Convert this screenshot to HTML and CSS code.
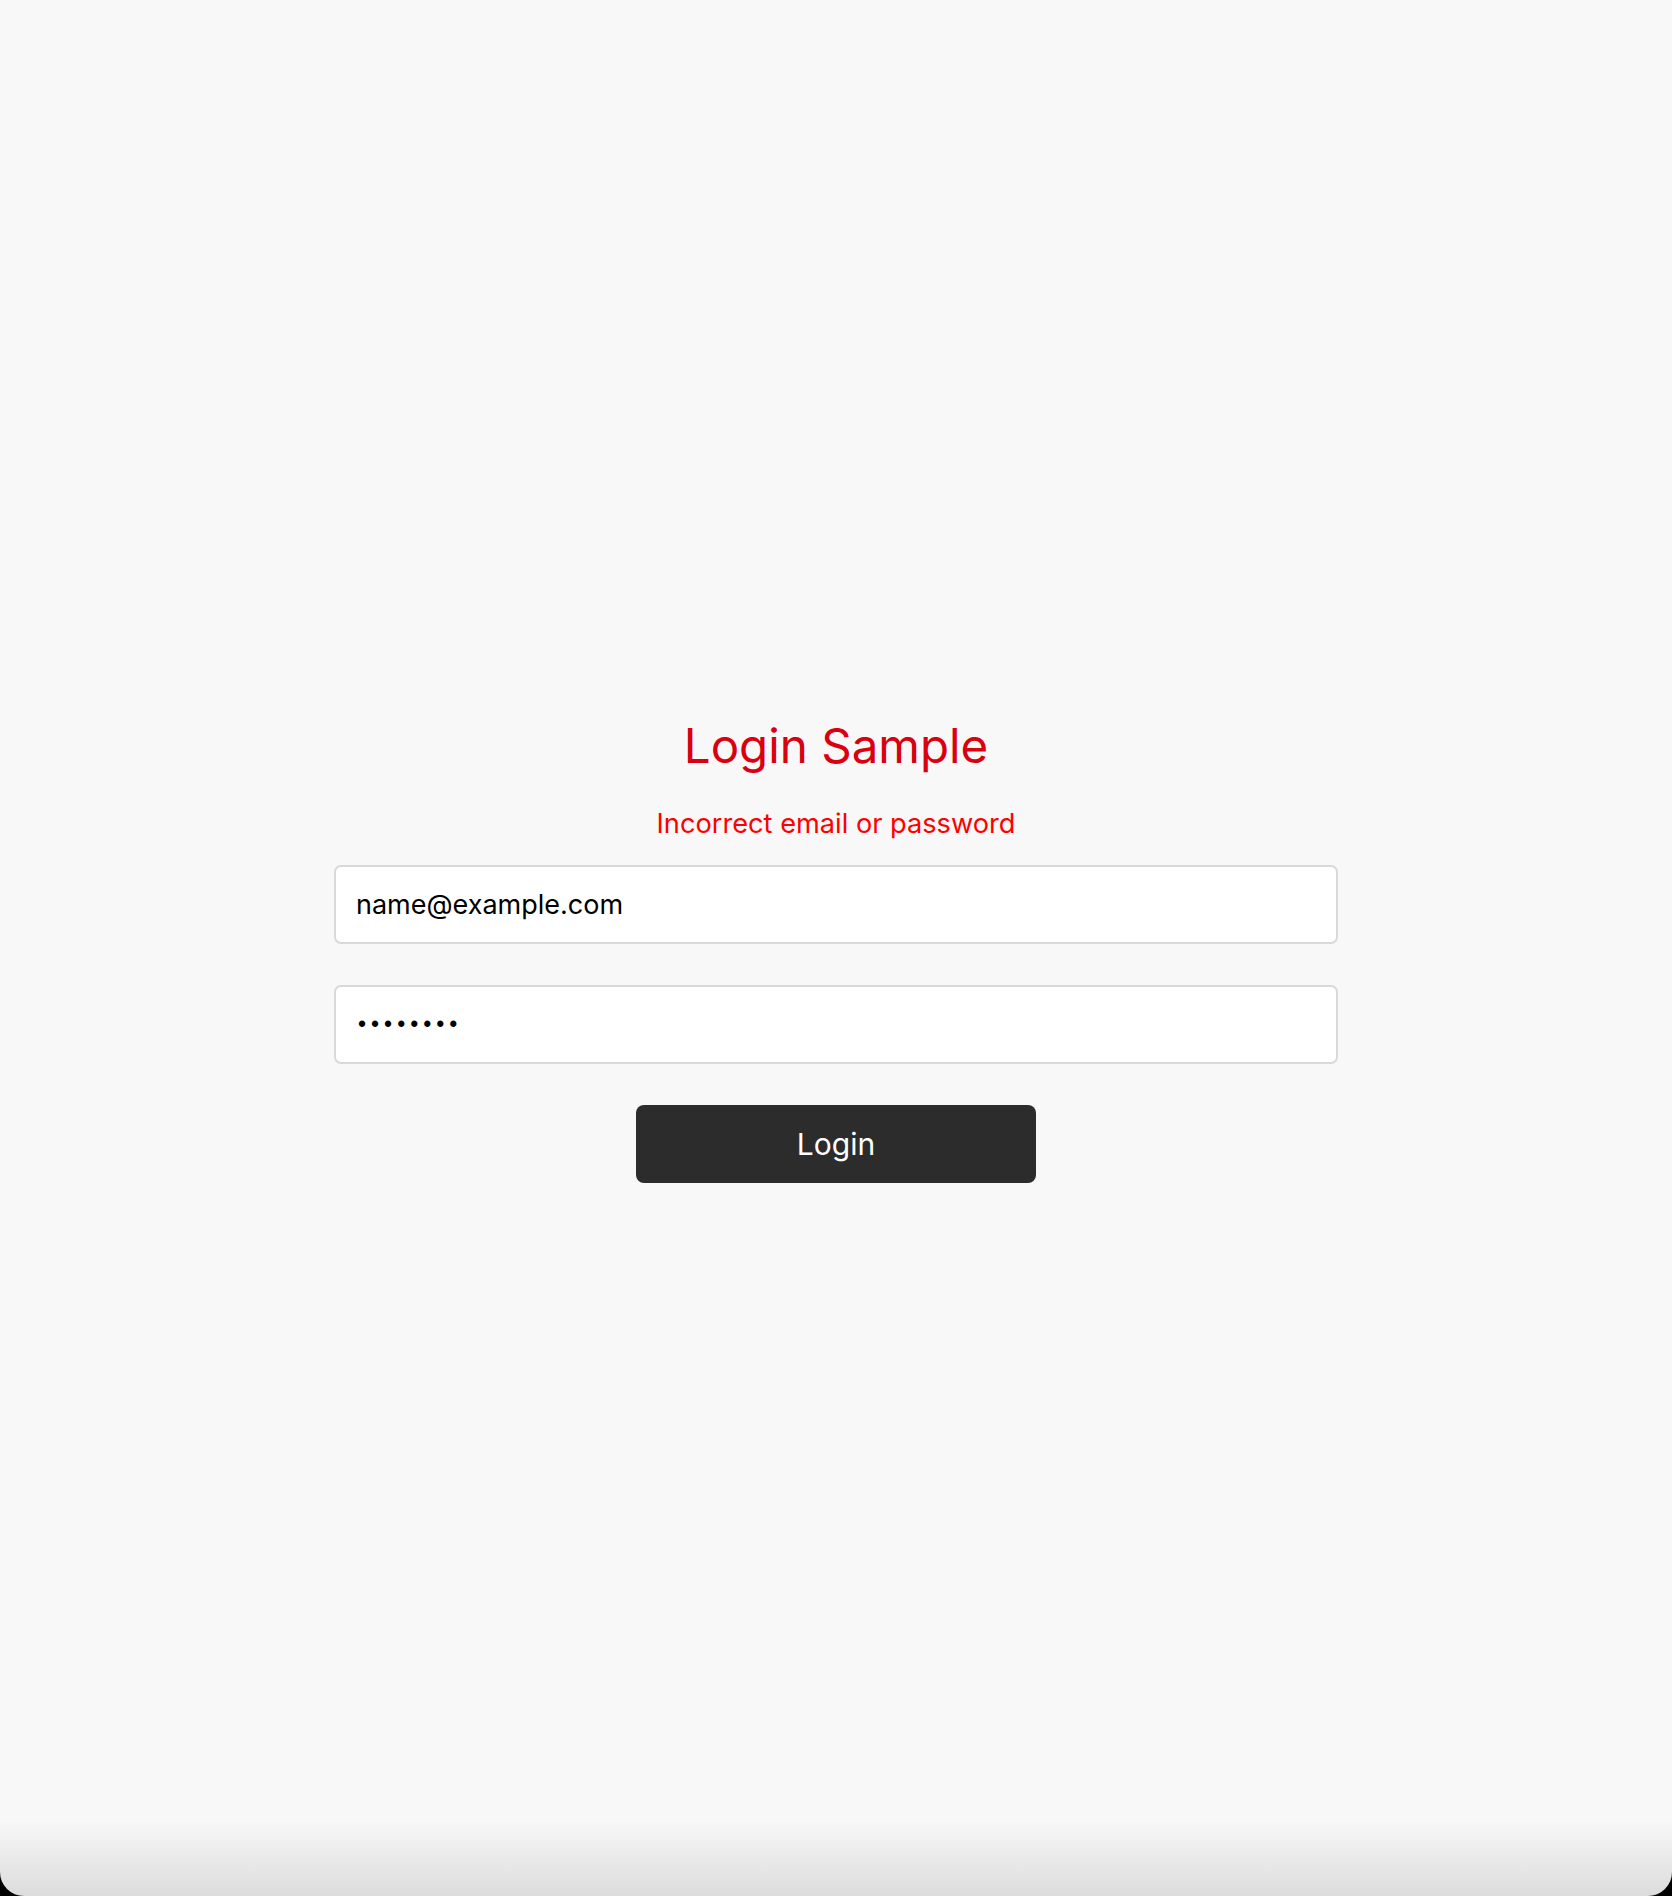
FILE: index.html
```html
<!DOCTYPE html>
<html lang="en">
<head>
<meta charset="utf-8">
<title>Login Sample</title>
<link rel="stylesheet" href="styles.css">
</head>
<body>
<main class="page">
  <form class="login">
    <h1 class="title">Login Sample</h1>
    <p class="error">Incorrect email or password</p>
    <input class="field" type="email" value="name@example.com">
    <input class="field field-pw" type="password" value="password">
    <button class="btn" type="button">Login</button>
  </form>
</main>
</body>
</html>
```
FILE: styles.css
```css
html {
  background: #000;
}
body {
  margin: 0;
  height: 1896px;
  background: linear-gradient(to bottom, #f8f8f8 0, #f8f8f8 1820px, #dcdcdc 1896px);
  border-radius: 0 0 24px 24px;
  font-family: Inter, "Noto Sans", sans-serif;
  overflow: hidden;
}
.page {
  box-sizing: border-box;
  height: 100%;
  padding-top: 4px;
  display: flex;
  align-items: center;
  justify-content: center;
}
.login {
  width: 1004px;
  display: flex;
  flex-direction: column;
  align-items: center;
}
.title {
  margin: 0;
  font-size: 47.5px;
  font-weight: 400;
  line-height: 58px;
  color: #d9000f;
}
.error {
  margin: 33px 0 25px;
  font-size: 27.2px;
  line-height: 32px;
  color: #ff0000;
}
.field {
  box-sizing: border-box;
  width: 100%;
  height: 79px;
  margin: 0 0 41px;
  padding: 0 20px;
  border: 2px solid #d9d9d9;
  border-radius: 7px;
  background: #fff;
  font-family: inherit;
  font-size: 27px;
  color: #000;
  outline: none;
}
.field-pw {
  padding-left: 22px;
  font-family: "Liberation Sans", sans-serif;
  font-size: 23px;
  letter-spacing: 5px;
}
.btn {
  width: 400px;
  height: 78px;
  border: 0;
  border-radius: 8px;
  background: #2c2c2c;
  color: #fff;
  font-family: inherit;
  font-size: 30px;
}
```
